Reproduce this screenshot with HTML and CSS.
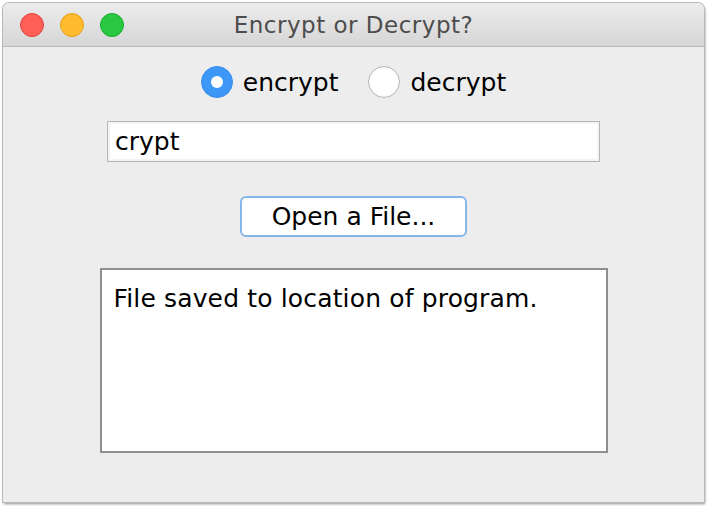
FILE: index.html
```html
<!DOCTYPE html>
<html>
<head>
<meta charset="utf-8">
<title>Encrypt or Decrypt?</title>
<link rel="stylesheet" href="styles.css">
</head>
<body>
<div class="window">
  <div class="titlebar">
    <div class="lights">
      <span class="light red"></span>
      <span class="light yellow"></span>
      <span class="light green"></span>
    </div>
    <div class="title">Encrypt or Decrypt?</div>
  </div>
  <div class="content">
    <div class="radios">
      <label class="radio"><span class="dot checked"></span><span class="rlabel">encrypt</span></label>
      <label class="radio"><span class="dot"></span><span class="rlabel">decrypt</span></label>
    </div>
    <div class="field">crypt</div>
    <div class="button">Open a File...</div>
    <div class="area">File saved to location of program.</div>
  </div>
</div>
</body>
</html>
```
FILE: styles.css
```css
html, body {
  margin: 0;
  padding: 0;
  background: #ffffff;
}
body {
  width: 708px;
  height: 506px;
  overflow: hidden;
  font-family: "DejaVu Sans", "Liberation Sans", sans-serif;
}
.window {
  margin: 3px 0 0 3px;
  width: 701px;
  height: 499px;
  border-radius: 6px 6px 0 0;
  background: #ededed;
  box-shadow: 0 0 0 1px #b8b8b8, 1px 2px 3px rgba(0,0,0,0.45);
  display: flex;
  flex-direction: column;
  overflow: hidden;
}
.titlebar {
  height: 43px;
  border-bottom: 1px solid #b9b9b9;
  background: linear-gradient(#ececec, #d6d6d6);
  display: flex;
  align-items: center;
  position: relative;
}
.lights {
  display: flex;
  gap: 16px;
  padding-left: 17px;
}
.light {
  width: 24px;
  height: 24px;
  border-radius: 50%;
  box-sizing: border-box;
}
.red { background: #fe5f57; border: 1px solid #e2463f; }
.yellow { background: #febc2e; border: 1px solid #e1a116; }
.green { background: #28c840; border: 1px solid #14ae2c; }
.title {
  position: absolute;
  left: 0;
  right: 0;
  top: 0;
  bottom: 0;
  display: flex;
  align-items: center;
  justify-content: center;
  font-family: "DejaVu Sans", sans-serif;
  font-size: 23px;
  letter-spacing: 0.5px;
  color: #4d4d4d;
}
.content {
  display: flex;
  flex-direction: column;
  align-items: center;
  color: #000;
  font-size: 25px;
}
.radios {
  margin-top: 19px;
  display: flex;
  gap: 30px;
  height: 32px;
  align-items: center;
}
.radio {
  display: flex;
  align-items: center;
  gap: 10px;
}
.dot {
  width: 32px;
  height: 32px;
  border-radius: 50%;
  box-sizing: border-box;
  background: #ffffff;
  border: 1px solid #b4b4b4;
  box-shadow: inset 0 -1px 1px rgba(0,0,0,0.05);
  position: relative;
}
.dot.checked {
  background: #3d97f7;
  border: 1px solid #3a8ff0;
}
.dot.checked::after {
  content: "";
  position: absolute;
  width: 12px;
  height: 12px;
  border-radius: 50%;
  background: #fff;
  left: 9px;
  top: 9px;
}
.field {
  margin-top: 23px;
  width: 493px;
  height: 41px;
  box-sizing: border-box;
  border: 1px solid #b6b6b6;
  box-shadow: inset 0 0 0 2px #f4f4f4;
  background: #fff;
  padding-left: 7px;
  display: flex;
  align-items: center;
}
.button {
  margin-top: 34px;
  width: 227px;
  height: 41px;
  box-sizing: border-box;
  border: 2px solid #86b5ea;
  border-radius: 6px;
  background: #fff;
  display: flex;
  align-items: center;
  justify-content: center;
}
.area {
  margin-top: 31px;
  width: 508px;
  height: 185px;
  box-sizing: border-box;
  border: 2px solid #8f8f8f;
  background: #fff;
  padding: 14px 12px;
  line-height: 1.2;
  letter-spacing: 0.15px;
}
```
